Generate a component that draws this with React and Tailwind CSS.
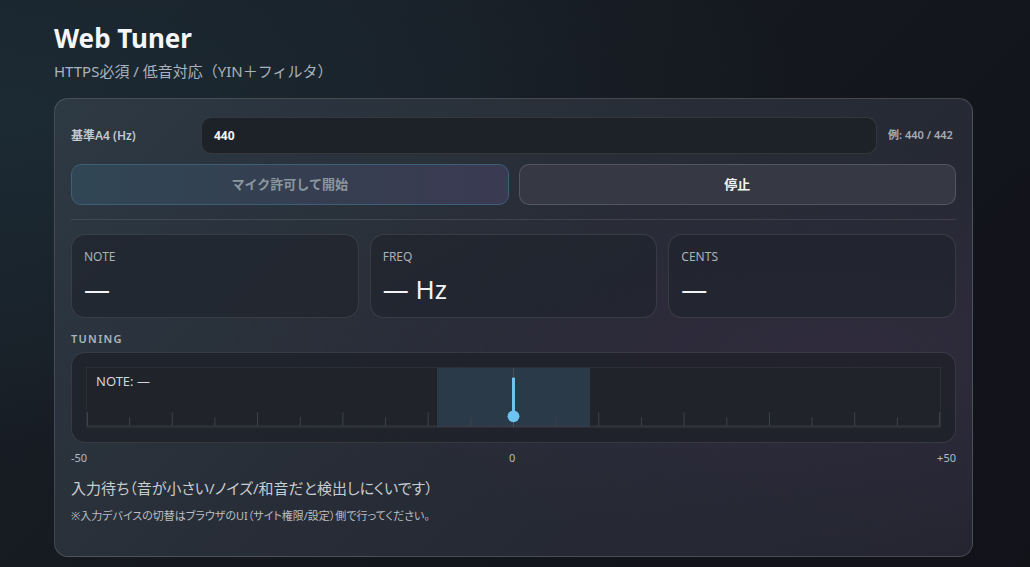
import React from 'react';

const FONT = { fontFamily: '"Noto Sans", "Noto Sans CJK JP", sans-serif' };

function Stat({ label, value }) {
  return (
    <div className="h-[84px] rounded-[14px] border border-white/10 bg-[#1f242c]/70 px-3 pt-[13px]">
      <div className="text-[12px] text-[#aab1b9]">{label}</div>
      <div className="mt-[6px] text-[26px] leading-[34px] text-[#f1f3f5]">{value}</div>
    </div>
  );
}

function Meter() {
  // ticks every 5 cents, major every 10
  const ticks = [];
  for (let i = 0; i <= 20; i++) ticks.push(i);
  return (
    <div className="rounded-[14px] border border-white/10 bg-[#1d2027]/70 p-[14px]">
      <div className="relative h-[61px] border border-white/[0.06] bg-[#20232a]">
        {/* in-tune band */}
        <div className="absolute top-0 bottom-0 left-[41%] w-[18%] bg-[#2a3a49]" />
        <svg className="absolute inset-0 h-full w-full" preserveAspectRatio="none" viewBox="0 0 856 61">
          <line x1="0" y1="60" x2="856" y2="60" stroke="#3a3e47" strokeWidth="1" />
          {ticks.map((i) => {
            const x = Math.min(855.5, Math.max(0.5, i * 42.8));
            const major = i % 2 === 0;
            return <line key={i} x1={x} x2={x} y1={major ? 46 : 51} y2="60" stroke="#3f434c" strokeWidth="1" />;
          })}
          <line x1="428" y1="0" x2="428" y2="61" stroke="#4a505a" strokeWidth="1" />
          <line x1="428" y1="10" x2="428" y2="50" stroke="#6ec4f0" strokeWidth="3" />
          <circle cx="428" cy="50" r="6" fill="#6ec4f0" />
        </svg>
        <div className="absolute left-[9px] top-[4px] text-[13px] text-[#d2d6dc]">NOTE: —</div>
      </div>
    </div>
  );
}

export default function App() {
  return (
    <div
      style={FONT}
      className="min-h-[567px] w-full bg-[radial-gradient(ellipse_at_0%_20%,#1c2a33_0%,transparent_55%),linear-gradient(135deg,#1a222b_0%,#15181f_45%,#121219_100%)] text-white"
    >
      <div className="ml-[54px] w-[919px] pt-[20px]">
        <h1 className="text-[26px] font-bold leading-[36px] text-[#f4f6f8]">Web Tuner</h1>
        <p className="mt-[5px] text-[15px] leading-[20px] text-[#a9b3bd]">HTTPS必須 / 低音対応（YIN＋フィルタ）</p>

        <div className="mt-[17px] h-[459px] rounded-[14px] border border-white/15 bg-[radial-gradient(ellipse_at_85%_55%,#2f2b3c_0%,transparent_55%),linear-gradient(135deg,#2d3943_0%,#272c36_50%,#252532_100%)] px-4 pt-[18px]">
          {/* A4 row */}
          <div className="flex items-center">
            <label className="w-[130px] shrink-0 text-[12px] font-semibold text-[#c3c9cf]">基準A4 (Hz)</label>
            <div className="flex h-[37px] flex-1 items-center rounded-[10px] border border-white/10 bg-[#1d2229] px-3 text-[12px] font-bold text-[#f2f4f6]">
              440
            </div>
            <span className="ml-[11px] w-[68px] text-[11px] font-semibold text-[#a7adb5]">例: 440 / 442</span>
          </div>

          {/* buttons */}
          <div className="mt-[10px] grid grid-cols-2 gap-[10px]">
            <button className="h-[41px] rounded-[10px] border border-[#3d5f78] bg-[linear-gradient(90deg,#304655_0%,#363e51_60%,#3a3a52_100%)] text-[13px] font-bold text-[#8c969f]">
              マイク許可して開始
            </button>
            <button className="h-[41px] rounded-[10px] border border-white/15 bg-[#363943] text-[13px] font-bold text-[#f2f4f6]">
              停止
            </button>
          </div>

          <div className="mt-[14px] h-px bg-white/10" />

          {/* stats */}
          <div className="mt-[14px] grid grid-cols-3 gap-[11px]">
            <Stat label="NOTE" value="—" />
            <Stat label="FREQ" value="— Hz" />
            <Stat label="CENTS" value="—" />
          </div>

          <div className="mt-[13px] text-[11px] font-semibold tracking-[0.12em] text-[#aeb5bd]">TUNING</div>
          <div className="mt-[4px]">
            <Meter />
          </div>
          <div className="mt-[7px] flex justify-between text-[11px] text-[#b4bac1]">
            <span>-50</span>
            <span>0</span>
            <span>+50</span>
          </div>

          <div className="mt-[11px] text-[15px] leading-[22px] text-[#c8cdd2] [font-feature-settings:'palt']">入力待ち（音が小さい/ノイズ/和音だと検出しにくいです）</div>
          <div className="mt-[9px] text-[11px] text-[#b9bec4] [font-feature-settings:'palt']">※入力デバイスの切替はブラウザのUI（サイト権限/設定）側で行ってください。</div>
        </div>
      </div>
    </div>
  );
}
